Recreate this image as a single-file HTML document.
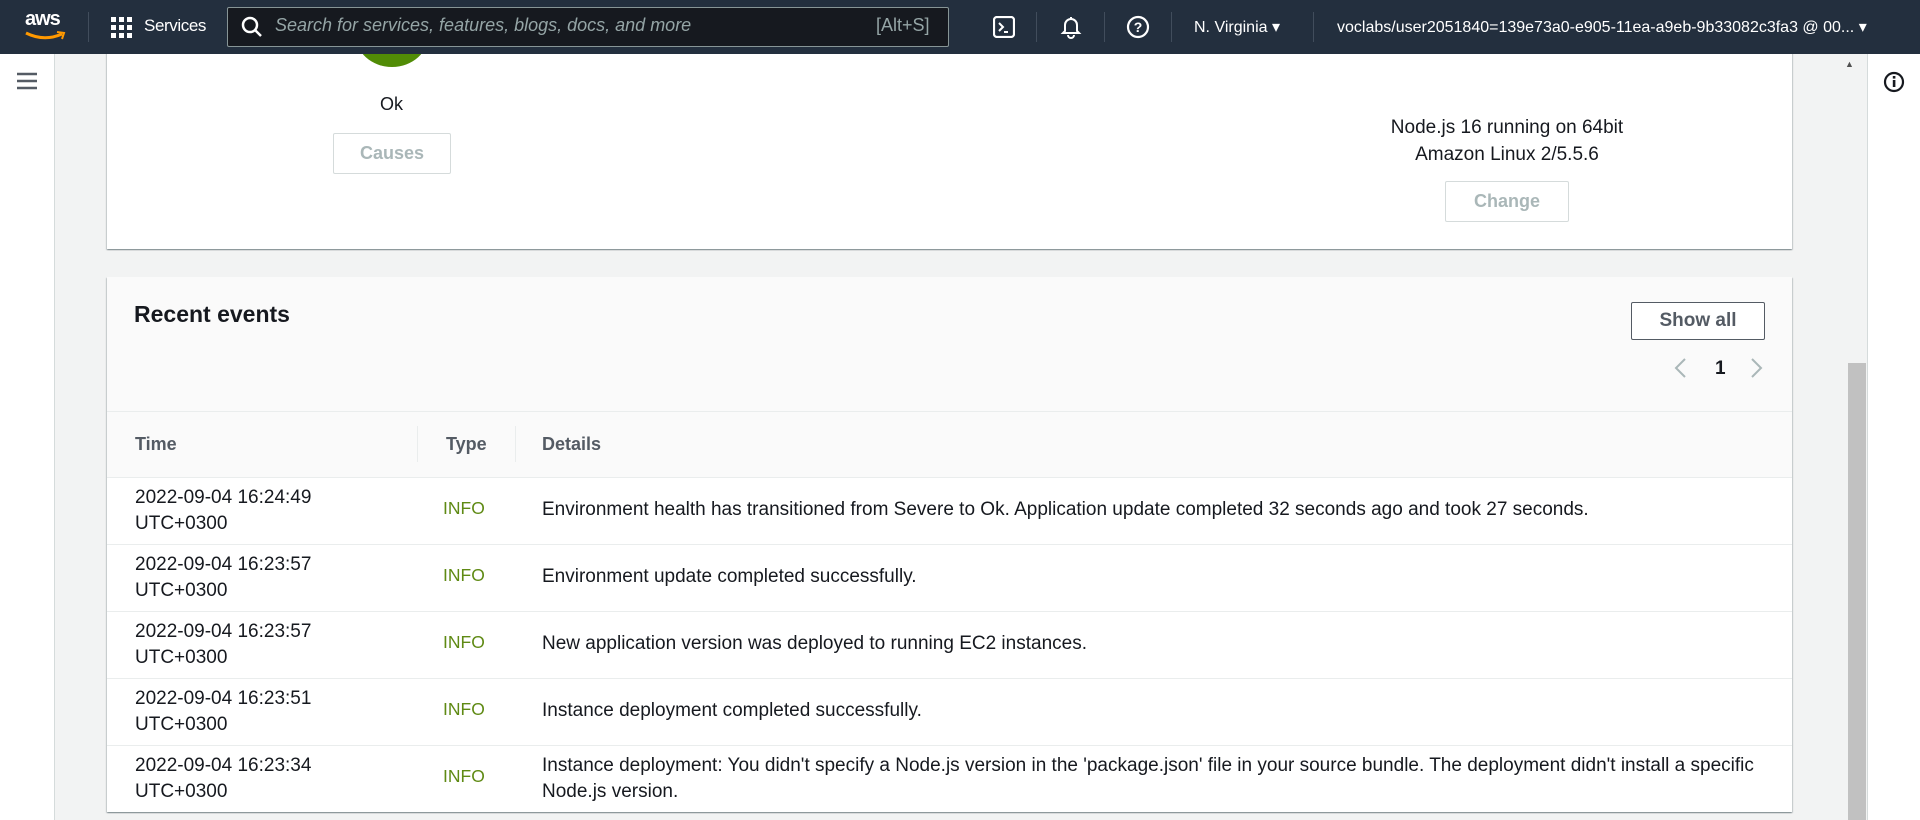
<!DOCTYPE html>
<html><head><meta charset="utf-8"><style>
*{box-sizing:border-box;margin:0;padding:0}
body{width:1920px;height:820px;overflow:hidden;background:#f2f3f3;font-family:"Liberation Sans",sans-serif;color:#16191f;position:relative}
.hdr{position:absolute;left:0;top:0;width:1920px;height:54px;background:#232f3e;color:#fff;z-index:10}
.abs{position:absolute}
.nav{position:absolute;left:0;top:54px;width:55px;height:766px;background:#fff;border-right:1px solid #d5dbdb}
.card{position:absolute;background:#fff;box-shadow:0 1px 1px rgba(0,28,36,.3),1px 1px 1px rgba(0,28,36,.15),-1px 1px 1px rgba(0,28,36,.15)}
.btn{position:absolute;border:1px solid #d5dbdb;border-radius:2px;color:#aab7b8;font-weight:bold;font-size:18px;text-align:center;background:#fff}
.row{position:absolute;left:0;width:1685px;border-top:1px solid #eaeded;height:67px;font-size:19px}
.row .t{position:absolute;left:28px;top:7px;line-height:26px}
.row .i{position:absolute;left:336px;top:20px;color:#5f8a14;font-size:17.5px}
.row .d{position:absolute;left:435px;top:19px;line-height:26px;width:1240px}
</style></head><body>
<div class="hdr">
 <div class="abs" style="left:25px;top:8px;font-size:20px;font-weight:bold;letter-spacing:-1px">aws</div>
 <svg class="abs" style="left:24px;top:30px" width="44" height="12"><path d="M2 3 Q20 12 38 4" stroke="#ff9900" stroke-width="3" fill="none"/><path d="M33 2 L40 3 L38 9" stroke="#ff9900" stroke-width="2" fill="none"/></svg>
 <div class="abs" style="left:88px;top:12px;width:1px;height:30px;background:#414d5c"></div>
 <svg class="abs" style="left:111px;top:17px" width="22" height="22" fill="#fff"><rect x="0" y="0" width="5" height="5"/><rect x="8" y="0" width="5" height="5"/><rect x="16" y="0" width="5" height="5"/><rect x="0" y="8" width="5" height="5"/><rect x="8" y="8" width="5" height="5"/><rect x="16" y="8" width="5" height="5"/><rect x="0" y="16" width="5" height="5"/><rect x="8" y="16" width="5" height="5"/><rect x="16" y="16" width="5" height="5"/></svg>
 <div class="abs" style="left:144px;top:16px;font-size:17px;letter-spacing:-0.4px">Services</div>
 <div class="abs" style="left:227px;top:7px;width:722px;height:40px;background:#16191f;border:1px solid #879596;border-radius:2px"></div>
 <svg class="abs" style="left:241px;top:16px" width="22" height="22"><circle cx="9" cy="9" r="7" stroke="#fff" stroke-width="2.5" fill="none"/><path d="M14 14 L20 20" stroke="#fff" stroke-width="2.5"/></svg>
 <div class="abs" style="left:275px;top:15px;font-size:18px;font-style:italic;color:#95a5a6">Search for services, features, blogs, docs, and more</div>
 <div class="abs" style="left:876px;top:15px;font-size:18px;color:#95a5a6">[Alt+S]</div>
 <svg class="abs" style="left:993px;top:16px" width="22" height="22"><rect x="1" y="1" width="20" height="20" rx="3" stroke="#fff" stroke-width="2.2" fill="none"/><path d="M6 7 L10 11 L6 15 M11 16 H15" stroke="#fff" stroke-width="2" fill="none"/></svg>
 <div class="abs" style="left:1036px;top:12px;width:1px;height:30px;background:#414d5c"></div>
 <svg class="abs" style="left:1060px;top:15px" width="22" height="24"><path d="M11 2 V4 M5 16 V10 A6 6 0 0 1 17 10 V16 L19 18 H3 Z M8 20 A3 3 0 0 0 14 20" stroke="#fff" stroke-width="2" fill="none"/></svg>
 <div class="abs" style="left:1104px;top:12px;width:1px;height:30px;background:#414d5c"></div>
 <svg class="abs" style="left:1126px;top:15px" width="24" height="24"><circle cx="12" cy="12" r="10" stroke="#fff" stroke-width="2.2" fill="none"/><text x="12" y="17" fill="#fff" font-size="14" font-weight="bold" text-anchor="middle" font-family="Liberation Sans">?</text></svg>
 <div class="abs" style="left:1171px;top:12px;width:1px;height:30px;background:#414d5c"></div>
 <div class="abs" style="left:1194px;top:17px;font-size:16px">N. Virginia ▾</div>
 <div class="abs" style="left:1313px;top:12px;width:1px;height:30px;background:#414d5c"></div>
 <div class="abs" style="left:1337px;top:17px;font-size:16px">voclabs/user2051840=139e73a0-e905-11ea-a9eb-9b33082c3fa3 @ 00... ▾</div>
</div>
<div class="nav"><svg style="position:absolute;left:16px;top:18px" width="22" height="18"><path d="M1 2H21M1 9H21M1 16H21" stroke="#545b64" stroke-width="2.5"/></svg></div>
<div class="abs" style="left:1792px;top:54px;width:75px;height:766px;background:#f2f3f3"></div>
<div class="abs" style="left:1845px;top:59px;font-size:9px;color:#505050">▲</div>
<div class="abs" style="left:1848px;top:363px;width:18px;height:457px;background:#c1c1c1"></div>
<div class="abs" style="left:1867px;top:54px;width:53px;height:766px;background:#fff;border-left:1px solid #d5dbdb"></div>
<svg class="abs" style="left:1883px;top:71px" width="22" height="22"><circle cx="11" cy="11" r="9" stroke="#16191f" stroke-width="2.2" fill="none"/><rect x="9.8" y="9" width="2.6" height="7" fill="#16191f"/><rect x="9.8" y="5" width="2.6" height="2.6" fill="#16191f"/></svg>

<div class="card" style="left:107px;top:40px;width:1685px;height:209px"></div>
<div class="abs" style="left:355px;top:0px;width:74px;height:67px;border-radius:50%;background:#518c06"></div>
<div class="abs" style="left:380px;top:94px;font-size:18px">Ok</div>
<div class="btn" style="left:333px;top:133px;width:118px;height:41px;line-height:39px">Causes</div>
<div class="abs" style="left:1307px;top:114px;width:400px;text-align:center;font-size:19px;line-height:27px">Node.js 16 running on 64bit<br>Amazon Linux 2/5.5.6</div>
<div class="btn" style="left:1445px;top:181px;width:124px;height:41px;line-height:39px">Change</div>

<div class="card" style="left:107px;top:277px;width:1685px;height:535px;background:#fafafa">
 <div class="abs" style="left:27px;top:24px;font-size:23px;font-weight:bold">Recent events</div>
 <div class="abs" style="left:1524px;top:25px;width:134px;height:38px;border:1px solid #545b64;border-radius:2px;background:#fff;font-size:19px;font-weight:bold;color:#545b64;text-align:center;line-height:36px">Show all</div>
 <svg class="abs" style="left:1566px;top:80px" width="14" height="22"><path d="M12 2 L3 11 L12 20" stroke="#aab7b8" stroke-width="2" fill="none"/></svg>
 <div class="abs" style="left:1608px;top:81px;font-size:19px;font-weight:bold">1</div>
 <svg class="abs" style="left:1643px;top:80px" width="14" height="22"><path d="M2 2 L11 11 L2 20" stroke="#aab7b8" stroke-width="2" fill="none"/></svg>
 <div class="abs" style="left:0;top:134px;width:1685px;height:66px;border-top:1px solid #eaeded;font-size:18px;font-weight:bold;color:#545b64">
  <div class="abs" style="left:28px;top:22px">Time</div>
  <div class="abs" style="left:310px;top:14px;width:1px;height:36px;background:#eaeded"></div>
  <div class="abs" style="left:339px;top:22px">Type</div>
  <div class="abs" style="left:408px;top:14px;width:1px;height:36px;background:#eaeded"></div>
  <div class="abs" style="left:435px;top:22px">Details</div>
 </div>
 <div style="position:absolute;left:0;top:200px;width:1685px;height:335px;background:#fff">
  <div class="row" style="top:0"><div class="t">2022-09-04 16:24:49<br>UTC+0300</div><div class="i">INFO</div><div class="d">Environment health has transitioned from Severe to Ok. Application update completed 32 seconds ago and took 27 seconds.</div></div>
  <div class="row" style="top:67px"><div class="t">2022-09-04 16:23:57<br>UTC+0300</div><div class="i">INFO</div><div class="d">Environment update completed successfully.</div></div>
  <div class="row" style="top:134px"><div class="t">2022-09-04 16:23:57<br>UTC+0300</div><div class="i">INFO</div><div class="d">New application version was deployed to running EC2 instances.</div></div>
  <div class="row" style="top:201px"><div class="t">2022-09-04 16:23:51<br>UTC+0300</div><div class="i">INFO</div><div class="d">Instance deployment completed successfully.</div></div>
  <div class="row" style="top:268px"><div class="t">2022-09-04 16:23:34<br>UTC+0300</div><div class="i">INFO</div><div class="d" style="top:7px">Instance deployment: You didn't specify a Node.js version in the 'package.json' file in your source bundle. The deployment didn't install a specific Node.js version.</div></div>
 </div>
</div>
</body></html>
